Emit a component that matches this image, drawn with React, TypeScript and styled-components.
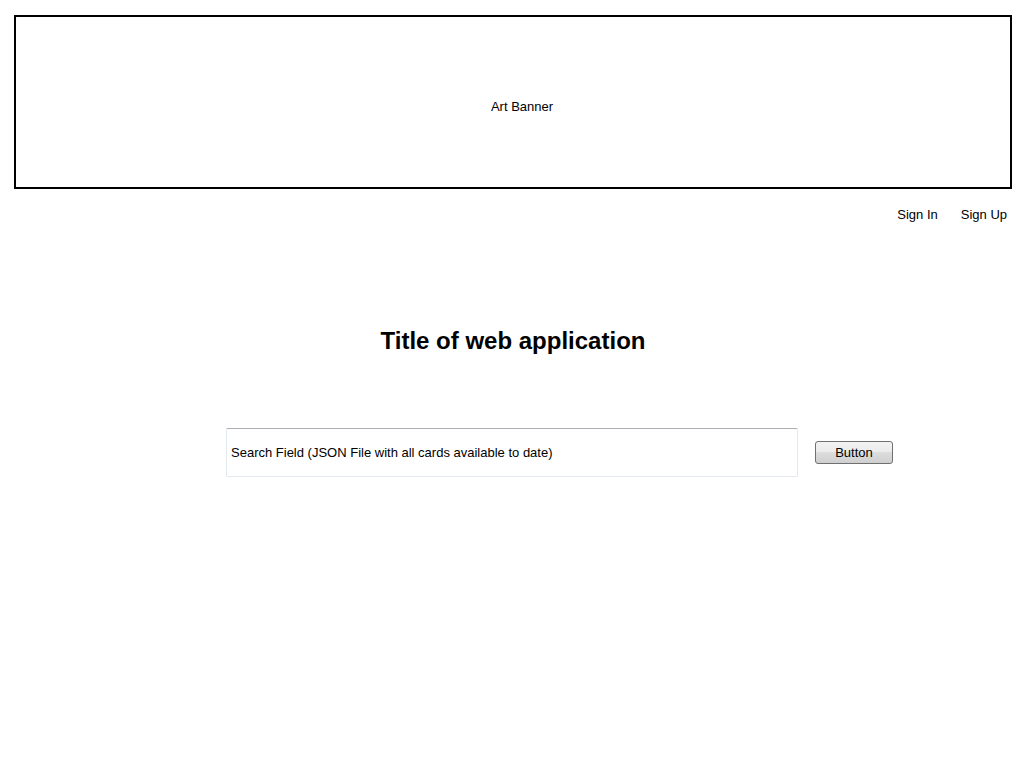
import React from 'react'
import styled, { createGlobalStyle } from 'styled-components'

const GlobalStyle = createGlobalStyle`
  html, body {
    margin: 0;
    padding: 0;
    background: #ffffff;
  }
  body {
    font-family: "Liberation Sans", Arial, sans-serif;
    color: #000000;
  }
`

const App = () => {
  return (
    <>
      <GlobalStyle />
      <Page>
        <Banner>
          <BannerText>Art Banner</BannerText>
        </Banner>
        <AuthBar>
          <AuthLink href="#">Sign In</AuthLink>
          <AuthLink href="#">Sign Up</AuthLink>
        </AuthBar>
        <Title>Title of web application</Title>
        <SearchRow>
          <SearchField
            type="text"
            readOnly
            value="Search Field (JSON File with all cards available to date)"
          />
          <SearchButton type="button">Button</SearchButton>
        </SearchRow>
      </Page>
    </>
  )
}

export default App

const Page = styled.div`
  display: flex;
  flex-direction: column;
  padding: 15px 12px 0 14px;
  min-height: 768px;
  box-sizing: border-box;
`

const Banner = styled.div`
  box-sizing: border-box;
  width: 998px;
  height: 174px;
  border: 2px solid #000000;
  display: flex;
  align-items: center;
  justify-content: center;
`

const BannerText = styled.div`
  font-size: 13px;
  padding-left: 18px;
  margin-top: 9px;
`

const AuthBar = styled.div`
  display: flex;
  justify-content: flex-end;
  gap: 23px;
  margin-top: 18px;
  padding-right: 5px;
`

const AuthLink = styled.a`
  font-size: 13px;
  line-height: 16px;
  color: #000000;
  text-decoration: none;
`

const Title = styled.h1`
  margin: 104px 0 0 0;
  font-size: 24px;
  line-height: 28px;
  font-weight: bold;
  text-align: center;
`

const SearchRow = styled.div`
  display: flex;
  align-items: center;
  gap: 17px;
  margin-top: 73px;
  padding-left: 212px;
`

const SearchField = styled.input`
  box-sizing: border-box;
  width: 572px;
  height: 49px;
  padding: 0 4px;
  margin: 0;
  font-family: "Liberation Sans", Arial, sans-serif;
  font-size: 13px;
  color: #000000;
  background: #ffffff;
  border: 1px solid #e3e9ef;
  border-top-color: #abadb3;
  border-radius: 2px;
  outline: none;
`

const SearchButton = styled.button`
  box-sizing: border-box;
  width: 78px;
  height: 23px;
  padding: 0;
  font-family: "Liberation Sans", Arial, sans-serif;
  font-size: 13px;
  color: #000000;
  border: 1px solid #707070;
  border-radius: 3px;
  background: linear-gradient(to bottom, #f2f2f2 0%, #ebebeb 49%, #dddddd 50%, #cfcfcf 100%);
  cursor: pointer;
`
